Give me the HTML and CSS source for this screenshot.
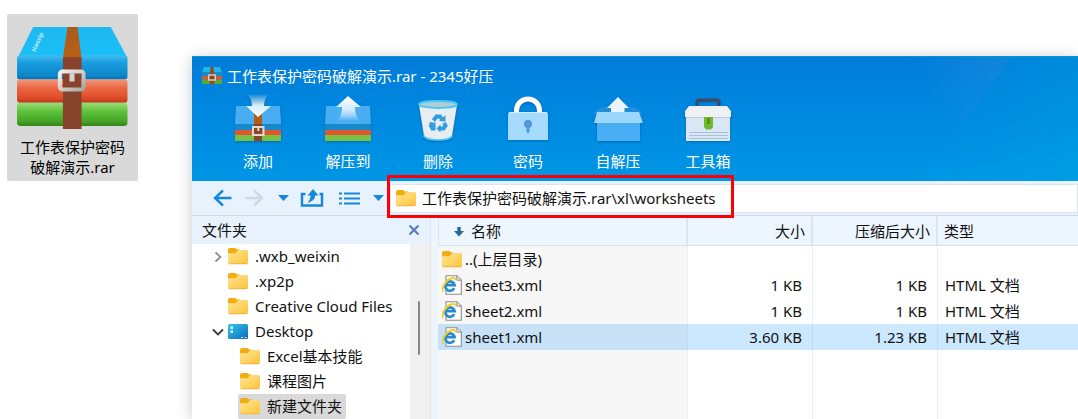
FILE: index.html
```html
<!DOCTYPE html>
<html lang="zh-CN">
<head>
<meta charset="utf-8">
<title>工作表保护密码破解演示.rar - 2345好压</title>
<link rel="stylesheet" href="styles.css">
</head>
<body>
<svg class="defs" aria-hidden="true">
  <defs>
    <linearGradient id="gFolder" x1="0" y1="0" x2="1" y2="1"><stop offset="0" stop-color="#ffe695"/><stop offset="1" stop-color="#fcc43a"/></linearGradient>
    <linearGradient id="gTop" x1="0" y1="0" x2="0" y2="1"><stop offset="0" stop-color="#1fb7f0"/><stop offset="1" stop-color="#18c0f8"/></linearGradient>
    <linearGradient id="gBlue" x1="0" y1="0" x2="0" y2="1"><stop offset="0" stop-color="#45bdf0"/><stop offset=".3" stop-color="#1a9ee0"/><stop offset=".85" stop-color="#0b86c8"/><stop offset="1" stop-color="#0a6ea8"/></linearGradient>
    <linearGradient id="gRed" x1="0" y1="0" x2="0" y2="1"><stop offset="0" stop-color="#f2987c"/><stop offset=".4" stop-color="#ea6440"/><stop offset=".8" stop-color="#df4c28"/><stop offset="1" stop-color="#b83a1c"/></linearGradient>
    <linearGradient id="gGreen" x1="0" y1="0" x2="0" y2="1"><stop offset="0" stop-color="#9ade78"/><stop offset=".4" stop-color="#5cc038"/><stop offset=".8" stop-color="#45a426"/><stop offset="1" stop-color="#35841c"/></linearGradient>
    <linearGradient id="gStrap" x1="0" y1="0" x2="0" y2="1"><stop offset="0" stop-color="#a85a20"/><stop offset="1" stop-color="#bb6014"/></linearGradient>
    <linearGradient id="gBuckle" x1="0" y1="0" x2="1" y2="1"><stop offset="0" stop-color="#f4f2f0"/><stop offset="1" stop-color="#aaa6a2"/></linearGradient>
    <linearGradient id="gDown" x1="0" y1="0" x2="0" y2="1"><stop offset="0" stop-color="#fff" stop-opacity="0"/><stop offset=".5" stop-color="#d8ecfc"/><stop offset="1" stop-color="#fff"/></linearGradient>
    <linearGradient id="gUp" x1="0" y1="0" x2="0" y2="1"><stop offset="0" stop-color="#fff"/><stop offset=".55" stop-color="#d2ebfd"/><stop offset="1" stop-color="#fff" stop-opacity="0"/></linearGradient>
    <linearGradient id="gDesk" x1="0" y1="0" x2="1" y2="1"><stop offset="0" stop-color="#35c6e8"/><stop offset="1" stop-color="#0c6cbd"/></linearGradient>
    <symbol id="folder" viewBox="0 0 20 17">
      <path d="M0 2V6H12V1.6H9L7.5 0H2Q0 0 0 2Z" fill="#f3ad12"/>
      <path d="M0 5.2H7.5L10.2 2H18.4Q20 2 20 3.6V14.6Q20 16 18.4 16H1.6Q0 16 0 14.6Z" fill="url(#gFolder)"/>
      <path d="M.6 15.8H19.4" stroke="#e3aa35" stroke-width=".7"/>
    </symbol>
    <symbol id="xml" viewBox="0 0 20 20">
      <path d="M4 .7H15L19.3 5V19.3H4Z" fill="#fff" stroke="#8d8d8d" stroke-width="1.1"/>
      <path d="M14.8 .8V5.2H19.2" fill="#e6e6e6" stroke="#8d8d8d"/>
      <path d="M12.2 13.2A4.700 4.700 0 1 1 12.600 10.100H4" fill="none" stroke="#2789d6" stroke-width="2.700"/>
      <path d="M1.2 16.8C-.8 13.5 3 5.5 9.5 3.2Q13.6 2 13.6 5.3" fill="none" stroke="#f3ce22" stroke-width="2"/>
    </symbol>
  </defs>
</svg>

<figure class="desktop-file">
  <svg class="archive" viewBox="0 0 110 101" aria-hidden="true">
    <path d="M16 0H93L109 30H1Z" fill="url(#gTop)"/>
    <rect y="28" width="109.500" height="24" rx="3" fill="url(#gBlue)"/>
    <rect y="52" width="109.500" height="23" rx="3" fill="url(#gRed)"/>
    <rect y="75" width="109.500" height="23" rx="3" fill="url(#gGreen)"/>
    <path d="M50 0H60L64 31H45.500Z" fill="url(#gStrap)"/>
    <path d="M45.500 30H64V101H45.500Z" fill="#87432b"/>
    <rect x="42.500" y="44" width="23.500" height="18" rx="2.500" fill="none" stroke="url(#gBuckle)" stroke-width="4"/>
    <rect x="52" y="46" width="5" height="8" fill="#d8d4d0"/>
    <text x="18" y="25" class="brand" transform="rotate(-66 18 25)">Haozip</text>
  </svg>
  <figcaption>工作表保护密码破解演示.rar</figcaption>
</figure>

<main class="window">
  <header class="banner">
    <svg class="shine" viewBox="0 0 200 125" preserveAspectRatio="none" aria-hidden="true">
      <defs><linearGradient id="gShine" x1="0" y1=".4" x2=".8" y2="0"><stop offset=".2" stop-color="#fff" stop-opacity="0"/><stop offset="1" stop-color="#fff" stop-opacity=".06"/></linearGradient>
      <linearGradient id="gShine2" x1="0" y1="0" x2="1" y2="0"><stop offset="0" stop-color="#00a0e0" stop-opacity=".05"/><stop offset="1" stop-color="#00a8e0" stop-opacity=".35"/></linearGradient></defs>
      <path d="M30 0H134L50 115Z" fill="url(#gShine)"/><path d="M134 0H200V125H43Z" fill="url(#gShine2)"/>
    </svg>
    <div class="titlebar">
      <svg width="20" height="18" viewBox="0 0 20 18" aria-hidden="true"><path d="M2 0H18L20 5V10H0V5Z" fill="#1fb4ea"/><path d="M0 5H20V9H0Z" fill="#148cc4"/><path d="M0 9H20V12.500H0Z" fill="#e0552f"/><path d="M0 12.500H20V17H0Z" fill="#58ab33"/><path d="M8.500 0H11.500L12.500 17H7.500Z" fill="#914b20"/><rect x="6.800" y="8" width="6.400" height="5" fill="#87432b" stroke="#e2ddd8" stroke-width="1.300"/></svg>
      <h1>工作表保护密码破解演示.rar - 2345好压</h1>
    </div>
    <nav class="toolbar">
      <button type="button"><svg viewBox="0 0 52 52" aria-hidden="true"><path d="M4 13H48L49 31H3Z" fill="#49adf2"/><path d="M3 31H49V37H3Z" fill="#168ac8"/><path d="M3 37H49V42H3Z" fill="#df5630"/><path d="M3 42H49V48H3Z" fill="#76c242"/><path d="M22 20H30V48H22Z" fill="#8d4424"/><path d="M22 20H30V31H22Z" fill="#b35e16"/><rect x="21" y="34" width="10.500" height="8" fill="none" stroke="#dedad6" stroke-width="2"/><path d="M26.300 34V38" stroke="#dedad6" stroke-width="2"/><path d="M15 1Q20 5 20 13H14L26 24L39 13H32Q32 5 37 1Z" fill="url(#gDown)"/></svg>添加</button>
      <button type="button"><svg viewBox="0 0 52 52" aria-hidden="true"><path d="M4 13H48L49 31H3Z" fill="#49adf2"/><path d="M3 31H49V37H3Z" fill="#168ac8"/><path d="M3 37H49V42H3Z" fill="#df5630"/><path d="M3 42H49V48H3Z" fill="#76c242"/><path d="M26 3L39 14H33Q33 23 38 28H15Q20 23 20 14H14Z" fill="url(#gUp)"/></svg>解压到</button>
      <button type="button"><svg viewBox="0 0 52 52" aria-hidden="true"><path d="M7 12L12 43Q13 47 26 47T40 43L45 12Z" fill="#e8edf2"/><path d="M11.500 42.500Q14 47 26 47T40.500 42.500" fill="none" stroke="#55c8f4" stroke-width="1.600"/><ellipse cx="26" cy="11.500" rx="19" ry="3.500" fill="#b5cbd5" stroke="#44cbf8" stroke-width="1.800"/><g fill="none" stroke="#2f9fe0" stroke-width="4"><path d="M21.500 27.500L24.500 23.500H28L30 26.500"/><path d="M32 30L33.500 32.500L31.500 35.500H28"/><path d="M23.500 35.500H20.500L19 32.500L20.500 30"/></g><g fill="#2f9fe0"><path d="M27 28L33.500 28.500V22Z"/><path d="M28.500 31.500V39.500L24.500 35.500Z"/><path d="M16.500 29.500H23.500V34.500Z"/></g></svg>删除</button>
      <button type="button"><svg viewBox="0 0 52 52" aria-hidden="true"><path d="M14.500 22V17.500A11.500 11.500 0 0 1 37.500 17.500V22" fill="none" stroke="#fff" stroke-width="5"/><path d="M7 19H45L46 21V47H6V21Z" fill="#a6dafe"/><path d="M7 19.500H45" stroke="#d4edff"/><circle cx="26" cy="31" r="4" fill="#5496dc"/><path d="M24.500 32H27.500V39L26 40.500L24.500 39Z" fill="#5496dc"/></svg>密码</button>
      <button type="button"><svg viewBox="0 0 52 52" aria-hidden="true"><path d="M1 23Q4 14 14 14H38Q48 14 51 23L46 20H6Z" fill="#3a9fe8" fill-opacity=".6"/><path d="M5 30H48V48H5Z" fill="#49aef3"/><path d="M26 4L37 15H32.500V21H19V15H15Z" fill="#e8f4fe"/><path d="M5 19H47L51 30H2Z" fill="#9cd7ff"/></svg>自解压</button>
      <button type="button"><svg viewBox="0 0 52 52" aria-hidden="true"><path d="M15 14V9Q15 7 17.500 7H35Q37 7 37 9V14" fill="none" stroke="#3c4b62" stroke-width="2.800"/><path d="M4 23H48V48H4Z" fill="#d9e7f6"/><path d="M7 13H45L49 18V24H3V18Z" fill="#eef2f6"/><path d="M4 24.500H48" stroke="#bccbda"/><path d="M7 39.500H46M7 42.500H46M7 45.500H46" stroke="#adc0d3"/><path d="M22 24H31V34L29 36.500H24L22 34Z" fill="#70b92c"/><path d="M25.500 25H27.500V31H25.500Z" fill="#44880f"/></svg>工具箱</button>
    </nav>
  </header>

  <div class="navbar">
    <button type="button" class="nav-back" aria-label="后退"><svg width="19" height="18" viewBox="0 0 19 18"><path d="M10 1.500L2 9L10 16.500M2 9H18.500" fill="none" stroke="#1688dc" stroke-width="2.400"/></svg></button>
    <button type="button" class="nav-forward" aria-label="前进"><svg width="19" height="18" viewBox="0 0 19 18"><path d="M9 1.500L17 9L9 16.500M17 9H.5" fill="none" stroke="#d3d5df" stroke-width="2.400"/></svg></button>
    <button type="button" class="nav-history" aria-label="历史"><svg width="11" height="6" viewBox="0 0 11 6"><path d="M0 0H11L5.500 6Z" fill="#1688dc"/></svg></button>
    <button type="button" class="nav-up" aria-label="向上"><svg width="24" height="18" viewBox="0 0 24 18"><path d="M5.500 5H2V16.500H22V5H19.500" fill="none" stroke="#1688dc" stroke-width="2.400"/><path d="M13 0L18.500 6.500H15.200Q15.200 12 7 14Q10.500 11 10.500 6.500H7.500Z" fill="#1688dc"/></svg></button>
    <button type="button" class="nav-view" aria-label="视图"><svg width="21" height="13" viewBox="0 0 21 13"><path d="M0 1.500H3M0 6.500H3M0 11.500H3M5 1.500H21M5 6.500H21M5 11.500H21" stroke="#1688dc" stroke-width="2"/></svg></button>
    <button type="button" class="nav-menu" aria-label="视图选项"><svg width="11" height="6" viewBox="0 0 11 6"><path d="M0 0H11L5.500 6Z" fill="#1688dc"/></svg></button>
    <div class="address">
      <svg width="20" height="17"><use href="#folder"/></svg>
      <input type="text" aria-label="地址" value="工作表保护密码破解演示.rar\xl\worksheets">
      <span class="highlight"></span>
    </div>
  </div>

  <div class="panes">
    <aside class="sidebar">
      <div class="side-head"><h2>文件夹</h2><button type="button" aria-label="关闭"><svg width="12" height="12" viewBox="0 0 12 12"><path d="M1.500 1.500L10.500 10.500M10.500 1.500L1.500 10.500" stroke="#5a7fb8" stroke-width="2.200"/></svg></button></div>
      <div class="side-body">
        <ul class="tree">
          <li><span class="row"><svg class="twist" viewBox="0 0 12 12"><path d="M3.500 1.500L8.500 6L3.500 10.500" fill="none" stroke="#8c8c8c" stroke-width="1.700"/></svg><svg class="fold"><use href="#folder"/></svg><span class="name">.wxb_weixin</span></span></li>
          <li><span class="row"><span class="twist"></span><svg class="fold"><use href="#folder"/></svg><span class="name">.xp2p</span></span></li>
          <li><span class="row"><span class="twist"></span><svg class="fold"><use href="#folder"/></svg><span class="name">Creative Cloud Files</span></span></li>
          <li><span class="row"><svg class="twist" viewBox="0 0 12 12"><path d="M1 3.500L6 8.500L11 3.500" fill="none" stroke="#3c3c3c" stroke-width="1.900"/></svg><svg class="fold" viewBox="0 0 20 17"><rect y="1" width="20" height="15" rx="1.500" fill="url(#gDesk)"/><path d="M2.500 3.500H5V6H2.500ZM2.500 7.500H5V10H2.500Z" fill="#e4faff"/><path d="M13 14.500H15M16.500 14.500H18.500" stroke="#bfe4ff"/></svg><span class="name">Desktop</span></span>
            <ul>
              <li><span class="row"><svg class="fold"><use href="#folder"/></svg><span class="name">Excel基本技能</span></span></li>
              <li><span class="row"><svg class="fold"><use href="#folder"/></svg><span class="name">课程图片</span></span></li>
              <li><span class="row current"><svg class="fold"><use href="#folder"/></svg><span class="name">新建文件夹</span></span></li>
            </ul>
          </li>
        </ul>
        <div class="scroll"><div class="thumb"></div></div>
      </div>
    </aside>

    <section class="listing">
      <table>
        <colgroup><col class="c-name"><col class="c-size"><col class="c-size"><col></colgroup>
        <thead><tr><th scope="col"><svg class="sort" width="10" height="10" viewBox="0 0 10 10"><path d="M3.300 0H6.700V4H10L5 9.500L0 4H3.300Z" fill="#246b9c"/></svg>名称</th><th scope="col" class="num">大小</th><th scope="col" class="num">压缩后大小</th><th scope="col">类型</th></tr></thead>
        <tbody>
          <tr><td><span class="file"><svg class="fold"><use href="#folder"/></svg>..(上层目录)</span></td><td></td><td></td><td></td></tr>
          <tr><td><span class="file"><svg class="doc"><use href="#xml"/></svg>sheet3.xml</span></td><td class="num">1 KB</td><td class="num">1 KB</td><td>HTML 文档</td></tr>
          <tr><td><span class="file"><svg class="doc"><use href="#xml"/></svg>sheet2.xml</span></td><td class="num">1 KB</td><td class="num">1 KB</td><td>HTML 文档</td></tr>
          <tr class="selected"><td><span class="file"><svg class="doc"><use href="#xml"/></svg>sheet1.xml</span></td><td class="num">3.60 KB</td><td class="num">1.23 KB</td><td>HTML 文档</td></tr>
          <tr class="rest"><td></td><td></td><td></td><td></td></tr>
        </tbody>
      </table>
    </section>
  </div>
</main>
</body>
</html>
```
FILE: styles.css
```css
* { box-sizing: border-box; }

body {
  margin: 0;
  height: 100vh;
  display: flex;
  align-items: flex-start;
  overflow: hidden;
  background: #fff;
  color: #111;
  font: 15px/20px "Noto Sans", "Noto Sans CJK SC", sans-serif;
}

svg { display: block; flex: none; }
h1, h2 { margin: 0; font-size: 15px; font-weight: 400; }
ul { margin: 0; padding: 0; list-style: none; }
button { padding: 0; border: 0; background: none; color: inherit; font: inherit; }
.defs { position: absolute; width: 0; height: 0; }

/* Desktop file */
.desktop-file {
  flex: none;
  width: 131px;
  margin: 14px 0 0 7px;
  padding: 13px 10px 4px;
  border-radius: 2px;
  background: #d9d9d9;
}
.archive { width: 100%; height: auto; overflow: visible; }
.brand { font-size: 6px; font-weight: 700; fill: #c4ecfc; }
.desktop-file figcaption {
  margin-top: 8px;
  color: #000;
  text-align: center;
  word-break: break-all;
}

/* Window */
.window {
  flex: 1;
  min-width: 0;
  height: calc(100vh - 56px);
  margin: 56px 0 0 54px;
  display: flex;
  flex-direction: column;
  background: #fff;
  box-shadow: 0 2px 14px rgba(0, 0, 0, .22);
}

.banner {
  position: relative;
  flex: none;
  height: 125px;
  border-top: 1px solid #0096d8;
  background: linear-gradient(#007cd9, #0096e6);
  color: #fff;
}
.shine { position: absolute; top: 0; right: 0; width: 200px; height: 100%; }
.titlebar { display: flex; align-items: center; gap: 5px; padding: 9px 10px 0; }
.toolbar { display: flex; padding: 7px 21px 0; }
.toolbar button {
  width: 90px;
  display: flex;
  flex-direction: column;
  align-items: center;
  gap: 6px;
}
.toolbar svg { width: 52px; height: 52px; filter: drop-shadow(0 1px 1px rgba(0, 50, 110, .4)); }

.navbar {
  flex: none;
  display: flex;
  align-items: center;
  height: 35px;
  padding-left: 21px;
  border-bottom: 1px solid #cfdae6;
  background: #e7f2fc;
}
.nav-forward { margin-left: 13px; }
.nav-history { margin-left: 14px; }
.nav-up { margin-left: 11px; }
.nav-view { margin-left: 15px; }
.nav-menu { margin-left: 13px; }
.address {
  position: relative;
  flex: 1;
  display: flex;
  align-items: center;
  gap: 6px;
  height: 29px;
  margin-left: 6px;
  padding-left: 5px;
  border: 1px solid #dbe4ef;
  background: #fff;
}
.address input {
  flex: 1;
  min-width: 0;
  padding: 0;
  border: 0;
  outline: 0;
  background: none;
  color: inherit;
  font: inherit;
}
.highlight {
  position: absolute;
  top: -10px;
  left: -4px;
  width: 347px;
  height: 43px;
  border: 3px solid #fd0006;
}

.panes { flex: 1; min-height: 0; display: flex; }

/* Folder tree */
.sidebar { width: 238px; flex: none; display: flex; flex-direction: column; overflow: hidden; }
.side-head {
  flex: none;
  height: 28px;
  display: flex;
  align-items: center;
  justify-content: space-between;
  padding: 0 10px;
  background: #e7f2fc;
}
.side-body { flex: 1; min-height: 0; display: flex; }
.tree { flex: 1; padding-left: 20px; }
.tree ul { padding-left: 26px; }
.row { display: inline-flex; align-items: center; height: 25px; gap: 7px; vertical-align: top; }
.tree li { line-height: 25px; }
.row.current { border-radius: 2px; background: #d9d9d9; }
.tree ul .row { padding: 0 4px 0 2px; }
.twist { flex: none; width: 12px; height: 12px; margin-right: -3px; }
.fold { width: 20px; height: 17px; }
.doc { width: 20px; height: 20px; }
.scroll { width: 20px; padding: 57px 10px 0 8px; background: #f0f0f0; }
.thumb { height: 54px; border-radius: 1px; background: #868686; }

/* File list */
.listing {
  flex: 1;
  min-width: 0;
  padding-left: 7px;
  background: #edf4fc;
  border-left: 1px solid #dce5ef;
}
table { width: 100%; height: 100%; border-collapse: separate; border-spacing: 0; table-layout: fixed; background: #fff; }
.c-name { width: 250px; }
.c-size { width: 125px; }
th {
  height: 30px;
  padding: 0 6px;
  border-right: 2px solid #dbe5ef;
  border-bottom: 1px solid #d6e1ed;
  background: #edf6ff;
  font-weight: 400;
  text-align: left;
}
th:first-child { padding-left: 15px; border-left: 1px solid #dbe5ef; }
th:last-child { border-right: 0; }
td { height: 26px; padding: 0 7px; border-right: 1px solid #e3f0fb; }
td:first-child { padding-left: 4px; background: #f7f7f7; }
td:last-child { border-right: 0; }
.num { text-align: right; }
td.num { padding-right: 10px; }
.sort { display: inline-block; margin-right: 7px; }
.file { display: flex; align-items: center; gap: 3px; }
.selected td { background: #cce8ff; border-right-color: #bcdcf8; }
.selected td:first-child { background: #c7e1f6; }
.rest td { height: auto; }
```
